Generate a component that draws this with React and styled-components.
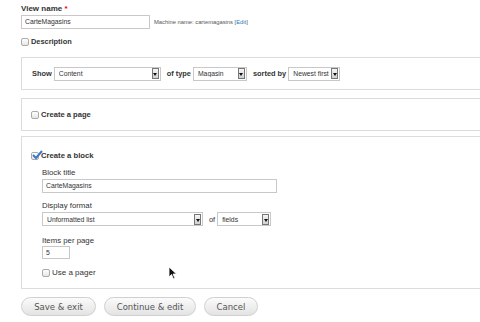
import React from "react"
import styled, { createGlobalStyle } from "styled-components"

const Global = createGlobalStyle`
  html, body { margin: 0; padding: 0; background: #fff; }
  body { font-family: "Liberation Sans", Arial, sans-serif; color: #333; overflow: hidden; }
`

const Page = styled.div`
  position: relative;
  width: 480px;
  height: 322px;
  overflow: hidden;
  padding: 3px 0 0 21px;
  box-sizing: border-box;
`

const Label = styled.div`
  font-size: ${p => (p.bold ? 8 : 7.8)}px;
  font-weight: ${p => (p.bold ? "bold" : "normal")};
  line-height: 11px;
  color: #333;
  height: 11px;
  margin-top: ${p => p.top || 0}px;
  margin-bottom: ${p => p.bottom || 0}px;
`

const Req = styled.span`
  color: #e00;
`

const Row = styled.div`
  display: flex;
  align-items: center;
  height: ${p => p.h || 11}px;
  margin-top: ${p => p.top || 0}px;
`

const TextInput = styled.div`
  box-sizing: border-box;
  width: ${p => p.w}px;
  height: ${p => p.h || 14}px;
  border: 1px solid #c8c8c8;
  background: #fff;
  font-size: 6.8px;
  line-height: ${p => (p.h || 14) - 2}px;
  padding-left: 3px;
  color: #333;
`

const Machine = styled.span`
  font-size: 5.8px;
  color: #555;
  margin-left: 4px;
  a { color: #2a7ac7; text-decoration: none; }
`

const CheckText = styled.span`
  font-size: ${p => p.size || 7.6}px;
  font-weight: ${p => (p.bold ? "bold" : "normal")};
  color: #333;
  margin-left: 2px;
  line-height: 11px;
`

const Box = styled.span`
  position: relative;
  display: inline-block;
  box-sizing: border-box;
  width: 8px;
  height: 8px;
  border: 1px solid #aaa;
  border-radius: 2px;
  background: linear-gradient(#fff, #e6e6e6);
  svg { position: absolute; left: 0; top: -3px; }
`

const Check = ({ checked }) => (
  <Box>
    {checked && (
      <svg width="11" height="10" viewBox="0 0 11 10">
        <path d="M1 5 L4 8 L10 1" fill="none" stroke="#3a78c8" strokeWidth="2" />
      </svg>
    )}
  </Box>
)

const Fieldset = styled.div`
  box-sizing: border-box;
  width: 470px;
  height: ${p => p.h}px;
  margin-top: ${p => p.top}px;
  border: 1px solid #dcdcdc;
  padding: ${p => p.pad || "0 0 0 9px"};
  display: flex;
  flex-direction: column;
  justify-content: ${p => (p.center ? "center" : "flex-start")};
`

const Inline = styled.span`
  font-size: 7.4px;
  font-weight: ${p => (p.bold ? "bold" : "normal")};
  color: #333;
  margin: 0 2px 0 ${p => p.ml || 5}px;
  white-space: nowrap;
`

const SelectBox = styled.div`
  box-sizing: border-box;
  width: ${p => p.w}px;
  height: 14px;
  border: 1px solid #c8c8c8;
  background: #fff;
  display: flex;
  align-items: center;
  font-size: 6.8px;
  color: #333;
  padding-left: 4px;
  span { flex: 1; white-space: nowrap; overflow: hidden; }
`

const Arrow = styled.div`
  width: 7px;
  height: 11px;
  margin-right: 1px;
  background: linear-gradient(#f6f6f6, #d0d0d0);
  border: 1px solid #777;
  box-sizing: border-box;
  display: flex;
  align-items: center;
  justify-content: center;
  &:after {
    content: "";
    border-left: 2px solid transparent;
    border-right: 2px solid transparent;
    border-top: 3px solid #111;
    margin-top: 2px;
  }
`

const Select = ({ w, children }) => (
  <SelectBox w={w}>
    <span>{children}</span>
    <Arrow />
  </SelectBox>
)

const Indent = styled.div`
  padding-left: 11px;
  display: flex;
  flex-direction: column;
`

const Buttons = styled.div`
  display: flex;
  gap: 8px;
  margin-top: 8px;
`

const Button = styled.div`
  box-sizing: border-box;
  height: 19px;
  width: ${p => p.w}px;
  border: 1px solid #d0d0d0;
  border-radius: 10px;
  background: linear-gradient(#fbfbfb, #e3e3e3);
  font-family: "DejaVu Sans", Verdana, sans-serif;
  font-size: 8.5px;
  color: #555;
  display: flex;
  align-items: center;
  justify-content: center;
`

const Cursor = styled.svg`
  position: absolute;
  left: 168px;
  top: 266px;
`

export default function App() {
  return (
    <Page>
      <Global />
      <Label bold bottom={1}>View name <Req>*</Req></Label>
      <Row h={14}>
        <TextInput w={129}>CarteMagasins</TextInput>
        <Machine>Machine name: cartemagasins [<a>Edit</a>]</Machine>
      </Row>
      <Row top={7}>
        <Check />
        <CheckText bold size={7.4}>Description</CheckText>
      </Row>

      <Fieldset h={33} top={10} center>
        <Row>
          <Inline bold ml={1}>Show</Inline>
          <Select w={107}>Content</Select>
          <Inline bold ml={6}>of type</Inline>
          <Select w={54}>Magasin</Select>
          <Inline bold ml={6}>sorted by</Inline>
          <Select w={52}>Newest first</Select>
        </Row>
      </Fieldset>

      <Fieldset h={33} top={8} center>
        <Row>
          <Check />
          <CheckText bold>Create a page</CheckText>
        </Row>
      </Fieldset>

      <Fieldset h={153} top={5} pad="13px 0 0 9px">
        <Row>
          <Check checked />
          <CheckText bold size={7.7}>Create a block</CheckText>
        </Row>
        <Indent>
          <Label top={6} bottom={1}>Block title</Label>
          <TextInput w={235}>CarteMagasins</TextInput>
          <Label top={7} bottom={1}>Display format</Label>
          <Row h={14}>
            <Select w={161}>Unformatted list</Select>
            <Inline ml={6}>of</Inline>
            <Select w={54}>fields</Select>
          </Row>
          <Label top={9}>Items per page</Label>
          <TextInput w={28} h={13}>5</TextInput>
          <Row top={8}>
            <Check />
            <CheckText size={8}>Use a pager</CheckText>
          </Row>
        </Indent>
      </Fieldset>

      <Buttons>
        <Button w={75}>Save &amp; exit</Button>
        <Button w={92}>Continue &amp; edit</Button>
        <Button w={54}>Cancel</Button>
      </Buttons>

      <Cursor width="10" height="15" viewBox="0 0 10 15">
        <path d="M1 1 L1 11 L3.5 8.5 L5.5 13 L7 12.3 L5 8 L8.5 8 Z" fill="#111" stroke="#fff" strokeWidth="0.8" />
      </Cursor>
    </Page>
  )
}
